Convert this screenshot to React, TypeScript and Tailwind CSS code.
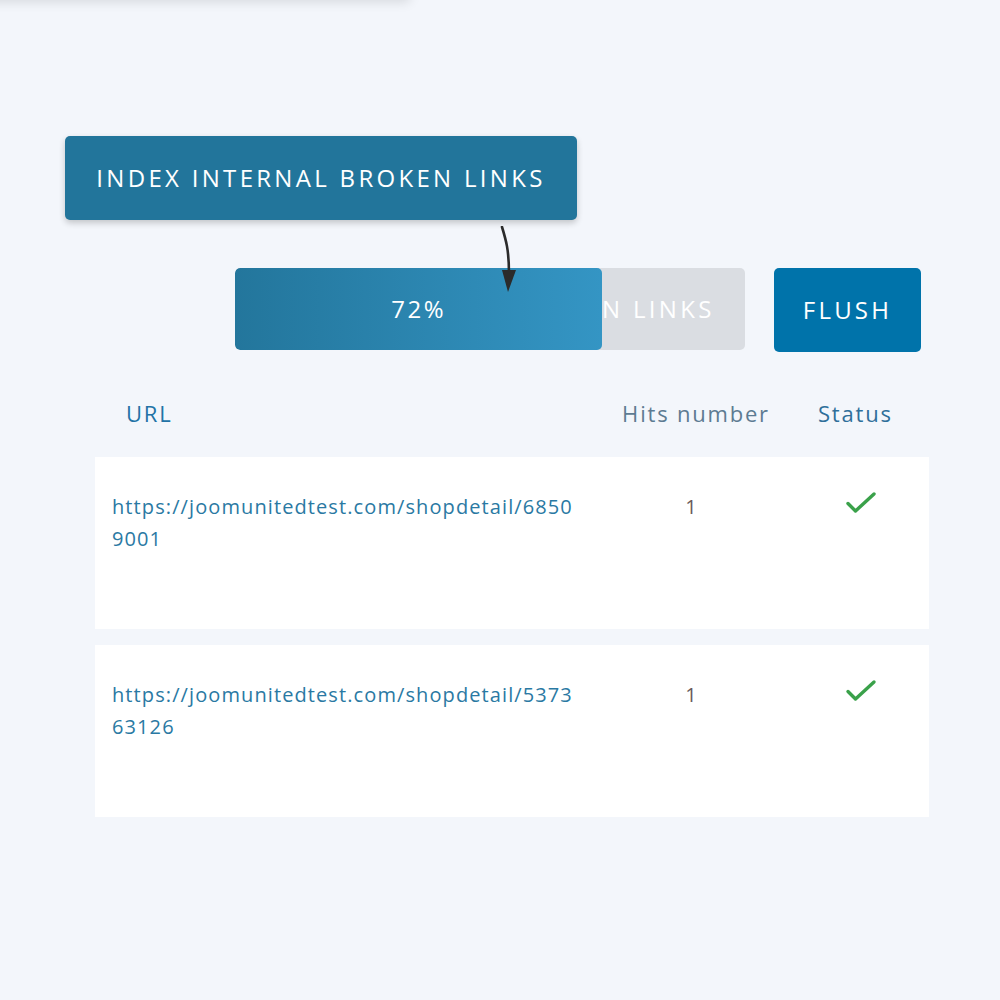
const rows = [
  { url: ["https://joomunitedtest.com/shopdetail/6850", "9001"], hits: 1 },
  { url: ["https://joomunitedtest.com/shopdetail/5373", "63126"], hits: 1 },
];

function Check() {
  return (
    <svg viewBox="0 0 32 24" className="h-[24px] w-[32px]" fill="none" aria-hidden>
      <path d="M3 12.5 10.5 20 29 3" stroke="#3aa14a" strokeWidth="3.4" strokeLinecap="round" strokeLinejoin="round" />
    </svg>
  );
}

export default function App() {
  const progress = 72;
  return (
    <div className="relative h-[1000px] w-[1000px] overflow-hidden bg-[#f3f6fb] font-['Open_Sans','Noto_Sans',sans-serif]">
      {/* card above, mostly off screen */}
      <div className="absolute -top-[40px] left-[-20px] h-[40px] w-[430px] rounded-b bg-[#f3f6fb] shadow-[0_2px_12px_rgba(0,0,0,0.12)]" />

      <div className="pt-[136px]">
        <div className="pl-[65px]">
          <button className="flex h-[84px] w-[512px] items-center justify-center rounded-[5px] bg-[#22759b] text-[24px] tracking-[3.3px] text-white shadow-[0_3px_6px_rgba(0,0,0,0.2)]">
            INDEX INTERNAL BROKEN LINKS
          </button>
        </div>

        <div className="relative mt-[48px] flex pl-[235px]">
          <div className="relative h-[82px] w-[510px] overflow-hidden rounded-[5px] bg-[#dadde2]">
            <div className="flex h-full items-center justify-center text-[24px] tracking-[3.3px] text-white">
              INDEX INTERNAL BROKEN LINKS
            </div>
            <div
              className="absolute inset-y-0 left-0 flex items-center justify-center rounded-[5px] bg-gradient-to-r from-[#23769c] to-[#3495c4] text-[24px] tracking-[2.5px] text-white"
              style={{ width: `${progress}%` }}
            >
              {progress}%
            </div>
          </div>
          <button className="ml-[29px] flex h-[84px] w-[147px] items-center justify-center rounded-[5px] bg-[#0073aa] text-[24px] tracking-[3.2px] text-white">
            FLUSH
          </button>

          {/* arrow pointing from index button to progress bar */}
          <svg className="absolute left-[494px] top-[-42px] h-[68px] w-[24px]" viewBox="0 0 24 68" fill="none" aria-hidden>
            <path d="M8 1 C12 14 15 24 15 48" stroke="#2b2b2b" strokeWidth="2.6" strokeLinecap="round" />
            <path d="M8 44 L22 44 L14 66 Z" fill="#2b2b2b" />
          </svg>
        </div>

        <div className="mt-[30px] pl-[95px] pr-[71px]">
          <div className="flex h-[75px] items-center pb-[12px] text-[22px] tracking-[1.8px]">
            <div className="w-[505px] pl-[31px] text-[#2273a6]">URL</div>
            <div className="w-[192px] text-center text-[#5d7b92]">Hits number</div>
            <div className="flex-1 pl-[26px] text-[#2f6f9a]">Status</div>
          </div>

          <div className="flex flex-col gap-[16px]">
            {rows.map((r, i) => (
              <div key={i} className="flex h-[172px] bg-white pt-[34px] text-[20px] leading-[32px]">
                <div className="w-[505px] pl-[17px] tracking-[1.1px] text-[#2a79a3]">
                  {r.url[0]}
                  <br />
                  {r.url[1]}
                </div>
                <div className="w-[182px] text-center text-[#6a5a5a]">{r.hits}</div>
                <div className="flex-1 pl-[63px]">
                  <Check />
                </div>
              </div>
            ))}
          </div>
        </div>
      </div>
    </div>
  );
}
